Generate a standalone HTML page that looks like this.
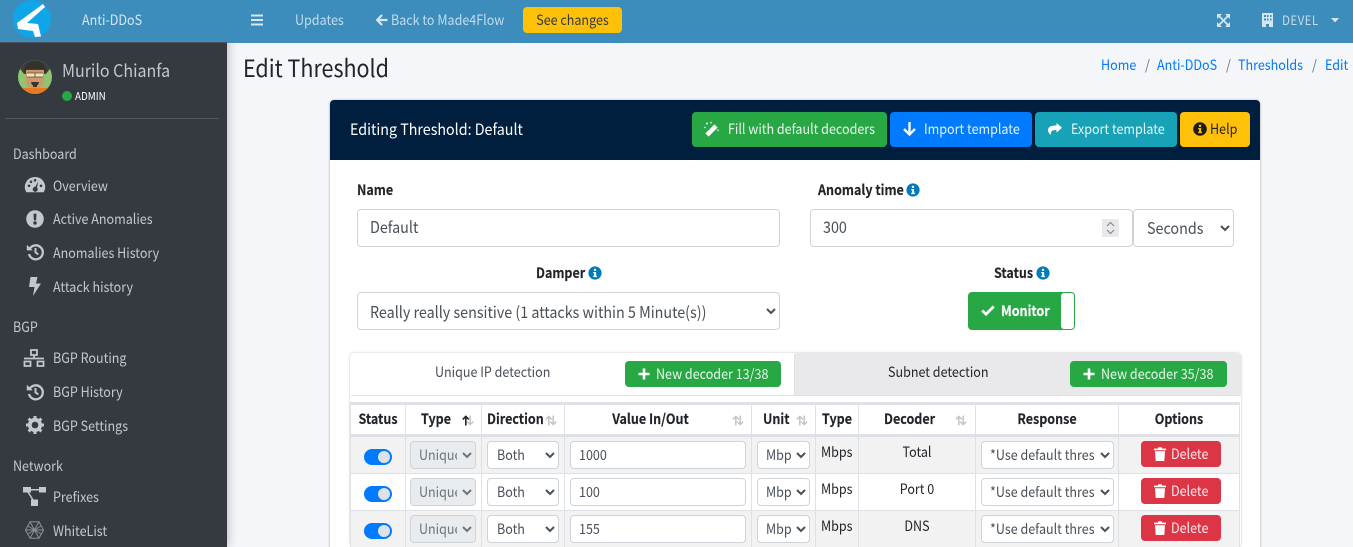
<!DOCTYPE html>
<html><head><meta charset="utf-8"><title>Edit Threshold</title>
<style>
*{box-sizing:border-box}
html,body{margin:0;padding:0;width:1353px;height:547px;overflow:hidden;background:#f4f6f9}
body{font-family:"Noto Sans CJK JP","Liberation Sans",sans-serif;position:relative;font-size:14px;color:#212529}
.a{position:absolute}
.t{position:absolute;white-space:nowrap;line-height:20px;transform:scaleX(.895);transform-origin:0 50%}
.c{text-align:center;transform-origin:50% 50%}
.b{font-weight:700;-webkit-text-stroke:.15px currentColor}
svg{position:absolute;display:block;overflow:visible}
.sb{color:#c2c7d0;font-size:14px}
.sh{color:#c2c7d0;font-size:14px}
.s{display:inline-block;transform:scaleX(.895);transform-origin:0 50%}
.btn{position:absolute;border-radius:4px;color:#fff;font-size:14px;line-height:20px;white-space:nowrap}
.in{position:absolute;background:#fff;border:1px solid #ced4da;border-radius:4px;color:#495057;font-size:16px;line-height:22px;padding-left:12px;white-space:nowrap}
.o{position:absolute;overflow:hidden;white-space:nowrap;line-height:20px;color:#495057;font-size:14px;height:20px}
select{position:absolute;margin:0;background:#fff;border:1px solid #ced4da;border-radius:4px;color:#495057;font-family:"Noto Sans CJK JP","Liberation Sans",sans-serif;padding:0 0 0 8px;font-size:14px}
select.g{background:#e9ecef;color:#6c757d}
.v{position:absolute;width:1px;background:#dee2e6;top:403px;height:144px}
.sw{position:absolute;left:364px;width:28px;height:16px;border-radius:8px;background:#007bff}
.sw i{position:absolute;left:14px;top:2px;width:12px;height:12px;border-radius:50%;background:#dee2e6}
</style></head><body>
<svg width="0" height="0" style="position:absolute"><defs>
<symbol id="info" viewBox="0 0 14 14"><circle cx="7" cy="7" r="6.6" fill="currentColor"/><rect x="5.9" y="2.8" width="2.2" height="2.1" fill="#fff"/><path d="M5.2 6h2.900v3.800h.9v1.300H5.2V9.800h.9V7.300h-.9z" fill="#fff"/></symbol>
<symbol id="infoy" viewBox="0 0 14 14"><circle cx="7" cy="7" r="6.800" fill="#1d1d1d"/><rect x="5.900" y="2.800" width="2.200" height="2.100" fill="#ffc107"/><path d="M5.200 6h2.900v3.800h.9v1.300H5.200V9.800h.9V7.300h-.9z" fill="#ffc107"/></symbol>
<symbol id="hist" viewBox="0 0 18 18"><path d="M3.400 6.500A7 7 0 1 1 3 11" fill="none" stroke="currentColor" stroke-width="2.300"/><path d="M.8 1.800l6 5.600H.8z" fill="currentColor"/><path d="M9.500 5v4.400l2.800 2" fill="none" stroke="currentColor" stroke-width="2"/></symbol>
<symbol id="sort" viewBox="0 0 14 11"><path d="M4.800 10.500V1.600M1.800 4.400l3-3 3 3" fill="none" stroke="#c4c4c4" stroke-width="1.500"/><path d="M9.200.6v8.900M6.200 6.600l3 3 3-3" fill="none" stroke="#c4c4c4" stroke-width="1.500"/></symbol>
<symbol id="plus" viewBox="0 0 12 12"><path d="M6 .5v11M.5 6h11" stroke="#fff" stroke-width="2.600" fill="none"/></symbol>
<symbol id="trash" viewBox="0 0 12 14"><path d="M0 1.600h3.600L4.400.3h3.200l.8 1.300H12v1.600H0z" fill="#fff"/><path d="M1 4.200h10l-.7 9.800H1.700z" fill="#fff"/></symbol>
</defs></svg>

<!-- Sidebar -->
<div class="a" style="left:0;top:0;width:227px;height:547px;background:#343a40;box-shadow:0 0 10px rgba(0,0,0,.3)"></div>
<div class="a" style="left:0;top:0;width:227px;height:43px;background:#3c8dbc;border-bottom:1px solid #4b545c"></div>
<svg style="left:13px;top:0" width="38" height="38" viewBox="0 0 38 38"><circle cx="19" cy="19" r="19" fill="#0ea5e9"/><path d="M30 4L4 23l1 6 15 2 2 6 6-.5-3-12.500-11-1L32 7z" fill="#fff"/></svg>
<div class="t" style="left:82px;top:10px;color:#d5e6f1;font-size:14px">Anti-DDoS</div>
<svg style="left:18px;top:60px" width="34" height="34" viewBox="0 0 34 34"><defs><clipPath id="av"><circle cx="17" cy="17" r="17"/></clipPath></defs><circle cx="17" cy="18" r="17" fill="#22262a" opacity=".5"/><g clip-path="url(#av)"><rect width="34" height="34" fill="#8fc56f"/><path d="M0 0h34v6L28 14 6 14 0 6z" fill="#3e3f3b"/><path d="M8 10h18v11q0 7-9 8-9-1-9-8z" fill="#c99a6b"/><path d="M6 13Q6 1 17 1T28 13l-3-4H9z" fill="#35312d"/><rect x="9" y="13" width="7" height="4" fill="#efe2c8"/><rect x="18" y="13" width="7" height="4" fill="#efe2c8"/><path d="M9 13h16M9 17h16" stroke="#6b4a2c" stroke-width=".8"/><path d="M13 22h8l-1 3h-1v2h-4v-2h-1z" fill="#3a322b"/><path d="M4 28h26v6H4z" fill="#e8791f"/></g></svg>
<div class="t" style="left:62px;top:61px;color:#c2c7d0;font-size:17.500px;transform:scaleX(.915)">Murilo Chianfa</div>
<div class="a" style="left:62px;top:91px;width:10px;height:10px;border-radius:50%;background:#28a745"></div>
<div class="t" style="left:74.500px;top:86px;color:#fff;font-size:11px">ADMIN</div>
<div class="a" style="left:5px;top:118px;width:214px;height:1px;background:#4f5962"></div>

<div class="t sh" style="left:13px;top:144px">Dashboard</div>
<div class="t sh" style="left:13px;top:317px">BGP</div>
<div class="t sh" style="left:13px;top:456px">Network</div>
<div class="t sb" style="left:53px;top:176px">Overview</div>
<div class="t sb" style="left:53px;top:209px">Active Anomalies</div>
<div class="t sb" style="left:53px;top:243px">Anomalies History</div>
<div class="t sb" style="left:53px;top:277px">Attack history</div>
<div class="t sb" style="left:53px;top:348px">BGP Routing</div>
<div class="t sb" style="left:53px;top:382px">BGP History</div>
<div class="t sb" style="left:53px;top:416px">BGP Settings</div>
<div class="t sb" style="left:53px;top:487px">Prefixes</div>
<div class="t sb" style="left:53px;top:521px">WhiteList</div>

<svg style="left:25px;top:177px" width="20" height="16" viewBox="0 0 20 16"><path fill="#c2c7d0" fill-rule="evenodd" d="M10 0a10 10 0 0 1 8.700 15.200H1.300A10 10 0 0 1 10 0zM4 7.500a1.300 1.300 0 1 0 0 2.600 1.300 1.300 0 0 0 0-2.600zM6 3.500a1.300 1.300 0 1 0 0 2.600 1.300 1.300 0 0 0 0-2.600zM10 2a1.300 1.300 0 1 0 0 2.600A1.300 1.300 0 0 0 10 2zM16 7.500a1.300 1.300 0 1 0 0 2.600 1.300 1.300 0 0 0 0-2.600zM13.300 4.500l-3 5.300a2.500 2.500 0 1 0 1.700.7z"/></svg>
<svg style="left:26px;top:210px" width="18" height="18" viewBox="0 0 18 18"><path fill="#c2c7d0" fill-rule="evenodd" d="M9 .2a8.800 8.800 0 1 1 0 17.600A8.800 8.800 0 0 1 9 .2zM7.500 3.600l.4 6.800h2.200l.4-6.800zM9 11.300a1.700 1.700 0 1 0 0 3.400 1.700 1.700 0 0 0 0-3.400z"/></svg>
<svg style="left:26px;top:243px;color:#c2c7d0" width="18" height="18"><use href="#hist"/></svg>
<svg style="left:29px;top:277px" width="12" height="19" viewBox="0 0 12 19"><path fill="#c2c7d0" d="M1.500 0h7L7 6.500h5L4 19l1.500-9H0z"/></svg>
<svg style="left:23px;top:349px" width="22" height="18" viewBox="0 0 22 18"><path fill="none" stroke="#c2c7d0" stroke-width="1.800" d="M8 1h6v5H8zM1.500 12.500h6v4.500h-6zM14.500 12.500h6v4.500h-6zM11 6v3M1 9.500h20"/></svg>
<svg style="left:26px;top:383px;color:#c2c7d0" width="18" height="18"><use href="#hist"/></svg>
<svg style="left:26px;top:416px" width="18" height="18" viewBox="0 0 18 18"><circle cx="9" cy="9" r="5.200" fill="none" stroke="#c2c7d0" stroke-width="3.800"/><path d="M9 0v18M0 9h18M2.600 2.600l12.800 12.800M15.400 2.600L2.600 15.400" stroke="#c2c7d0" stroke-width="3" stroke-dasharray="3.200 11.800" fill="none"/></svg>
<svg style="left:23px;top:487px" width="24" height="19" viewBox="0 0 24 19"><path fill="#c2c7d0" d="M0 0h8v5.500H0zM16 0h7v5.500h-7zM8 12.500h7V19H8z"/><path d="M8 2.800h8M5 5l5 8" stroke="#c2c7d0" stroke-width="1.500" fill="none"/></svg>
<svg style="left:25px;top:521px" width="19" height="18" viewBox="0 0 19 18"><path fill="none" stroke="#8a9097" stroke-width="1" d="M5 .8h9l4.500 8.200-4.500 8.200H5L.5 9zM5 .8l9 16.400M14 .8L5 17.200M.5 9h18M3 5l13 8M16 5L3 13"/></svg>

<!-- Top nav -->
<div class="a" style="left:227px;top:0;width:1126px;height:43px;background:#3c8dbc"></div>
<svg style="left:251px;top:14px" width="12" height="12" viewBox="0 0 12 12"><path d="M0 1.500h12M0 6h12M0 10.500h12" stroke="#d5e6f1" stroke-width="2"/></svg>
<div class="t" style="left:295px;top:10px;color:#c2dced;font-size:14px">Updates</div>
<svg style="left:376px;top:14px" width="12" height="12" viewBox="0 0 12 12"><path d="M11.500 6H2M6 1L1.200 6 6 11" stroke="#d5e6f1" stroke-width="2.200" fill="none"/></svg>
<div class="t" style="left:391px;top:10px;color:#c2dced;font-size:14px">Back to Made4Flow</div>
<div class="a" style="left:523px;top:7px;width:99px;height:26px;background:#ffc107;border-radius:4px"></div>
<div class="t c" style="left:523px;top:10px;width:99px;color:#343a40;font-size:14px">See changes</div>
<svg style="left:1216.500px;top:13.500px" width="13" height="13" viewBox="0 0 13 13"><path d="M2 2l9 9M11 2l-9 9" stroke="#d5e6f1" stroke-width="1.800"/><path fill="#d5e6f1" d="M0 0h5L0 5zM13 0v5L8 0zM0 13V8l5 5zM13 13H8l5-5z"/></svg>
<svg style="left:1262px;top:13px" width="11" height="14" viewBox="0 0 11 14"><path fill="#d5e6f1" fill-rule="evenodd" d="M0 0h11v14H7v-3H4v3H0zM2 2v2h2V2zM5 2v2h1.500V2zM8 2v2h1.500V2zM2 5.500v2h2v-2zM5 5.500v2h1.500v-2zM8 5.500v2h1.500v-2z"/></svg>
<div class="t" style="left:1282px;top:10px;color:#c2dced;font-size:13px;letter-spacing:.4px">DEVEL</div>
<svg style="left:1331px;top:18px" width="8" height="5" viewBox="0 0 8 5"><path fill="#d5e6f1" d="M0 0h8L4 4.500z"/></svg>

<!-- Page title -->
<div class="t" style="left:243px;top:52px;font-size:24px;line-height:30px;color:#212529">Edit Threshold</div>
<div class="t" style="left:1101px;top:55px;color:#007bff;font-size:14px">Home</div>
<div class="t" style="left:1145px;top:55px;color:#6c757d;font-size:14px">/</div>
<div class="t" style="left:1157px;top:55px;color:#007bff;font-size:14px">Anti-DDoS</div>
<div class="t" style="left:1226px;top:55px;color:#6c757d;font-size:14px">/</div>
<div class="t" style="left:1238px;top:55px;color:#007bff;font-size:14px">Thresholds</div>
<div class="t" style="left:1312px;top:55px;color:#6c757d;font-size:14px">/</div>
<div class="t" style="left:1324.500px;top:55px;color:#007bff;font-size:14px">Edit</div>

<!-- Card -->
<div class="a" style="left:330px;top:100px;width:930px;height:460px;background:#fff;border-radius:4px;box-shadow:0 0 2px rgba(0,0,0,.2),0 1px 3px rgba(0,0,0,.15)"></div>
<div class="a" style="left:330px;top:100px;width:930px;height:60px;background:#001f3f;border-radius:4px 4px 0 0"></div>
<div class="t" style="left:350px;top:119px;color:#fff;font-size:15.500px;transform:scaleX(.92)">Editing Threshold: Default</div>

<div class="btn" style="left:692px;top:112px;width:195px;height:35px;background:#28a745;line-height:35px;padding-left:35.500px;color:#e9f6ec"><span class="s">Fill with default decoders</span></div>
<svg style="left:704px;top:121px" width="16" height="16" viewBox="0 0 16 16"><path d="M3 14L12 5" stroke="#fff" stroke-width="4.500"/><path fill="#fff" d="M3 1l1 1.500L3 4 2 2.500zM7 .5l.8 1.300L7 3 6.200 1.800zM14 8l.8 1.200-.8 1.200-.8-1.200zM1 5.500l.8 1-.8 1-.8-1z"/></svg>
<div class="btn" style="left:890px;top:112px;width:142px;height:35px;background:#007bff;line-height:35px;padding-left:34px;color:#e6f2ff"><span class="s">Import template</span></div>
<svg style="left:903px;top:122px" width="13" height="14" viewBox="0 0 13 14"><path d="M6.500 0v12M1 7l5.500 5.500L12 7" stroke="#fff" stroke-width="2.300" fill="none"/></svg>
<div class="btn" style="left:1035px;top:112px;width:142px;height:35px;background:#17a2b8;line-height:35px;padding-left:36px;color:#e6f6f8"><span class="s">Export template</span></div>
<svg style="left:1048px;top:123px" width="14" height="12" viewBox="0 0 14 12"><path fill="#fff" d="M8.500 0L14 4.800 8.500 9.600V7C5 7 2.500 7.500 2.800 12 .8 10.500 0 8.500 0 7c0-3.500 4-4.500 8.500-4.500z"/></svg>
<div class="btn" style="left:1180px;top:112px;width:70px;height:35px;background:#ffc107;line-height:35px;padding-left:30px;color:#212529"><span class="s">Help</span></div>
<svg style="left:1193px;top:122px" width="14" height="14"><use href="#infoy"/></svg>

<!-- Form -->
<div class="t b" style="left:357px;top:180px;font-size:14px">Name</div>
<div class="in" style="left:357px;top:209px;width:423px;height:38px;line-height:32px"><span class="s">Default</span></div>
<div class="t b" style="left:817.500px;top:180px;font-size:14px">Anomaly time</div>
<svg style="left:906px;top:183px;color:#007bbd" width="14" height="14"><use href="#info"/></svg>
<div class="in" style="left:810px;top:209px;width:323px;height:38px;line-height:32px"><span class="s">300</span></div>
<div class="a" style="left:1102px;top:219px;width:17px;height:18px;background:#e9e9ed"></div>
<svg style="left:1106px;top:221px" width="9" height="14" viewBox="0 0 9 14"><path d="M1 5l3.500-3.500L8 5M1 9l3.500 3.500L8 9" stroke="#8a8a8f" stroke-width="1.200" fill="none"/></svg>
<select style="left:1133px;top:209px;width:101px;height:38px;font-size:14px"><option></option></select>
<div class="o" style="left:1147px;top:216px;width:60px;font-size:16px;height:22px;line-height:22px"><span class="s">Seconds</span></div>

<div class="t b" style="left:535.500px;top:263px;font-size:14px">Damper</div>
<svg style="left:588px;top:266px;color:#007bbd" width="14" height="14"><use href="#info"/></svg>
<select style="left:357px;top:292px;width:423px;height:38px;font-size:14px"><option></option></select>
<div class="o" style="left:370px;top:300px;width:380px;font-size:16px;height:22px;line-height:22px"><span class="s">Really really sensitive (1 attacks within 5 Minute(s))</span></div>
<div class="t b" style="left:993.500px;top:263px;font-size:14px">Status</div>
<svg style="left:1036px;top:266px;color:#007bbd" width="14" height="14"><use href="#info"/></svg>
<div class="a" style="left:968px;top:292px;width:107px;height:38px;background:#28a745;border-radius:4px"></div>
<div class="a" style="left:1061px;top:293px;width:13px;height:36px;background:#fff;border-radius:3px"></div>
<svg style="left:981px;top:305px" width="14" height="11" viewBox="0 0 14 11"><path d="M1.300 5.500L5 9.200 12.700 1.500" stroke="#fff" stroke-width="2.800" fill="none"/></svg>
<div class="t b" style="left:1001px;top:301px;color:#fff;font-size:14px">Monitor</div>

<!-- Tabs -->
<div class="a" style="left:350px;top:353px;width:891px;height:194px;background:#fff;border-radius:4px;box-shadow:0 0 2px rgba(0,0,0,.25)"></div>
<div class="a" style="left:795px;top:353px;width:446px;height:43px;background:#e9e9ec;border-radius:0 4px 0 0"></div>
<div class="a" style="left:351px;top:395px;width:889px;height:1px;background:#dee2e6"></div>
<div class="a" style="left:794px;top:354px;width:1px;height:42px;background:#dee2e6"></div>
<div class="t" style="left:435px;top:362px;font-size:14px;color:#495057">Unique IP detection</div>
<div class="t" style="left:888px;top:362px;font-size:14px;color:#212529">Subnet detection</div>
<div class="btn" style="left:625px;top:361px;width:156px;height:26px;background:#28a745;line-height:26px;padding-left:31px;color:#e9f6ec"><span class="s">New decoder 13/38</span></div>
<svg style="left:638px;top:368px" width="12" height="12"><use href="#plus"/></svg>
<div class="btn" style="left:1070px;top:361px;width:157px;height:26px;background:#28a745;line-height:26px;padding-left:31px;color:#e9f6ec"><span class="s">New decoder 35/38</span></div>
<svg style="left:1083px;top:368px" width="12" height="12"><use href="#plus"/></svg>

<!-- Table -->
<div class="a" style="left:350px;top:402px;width:890px;height:3px;background:#dee2e6"></div>
<div class="a" style="left:351px;top:434px;width:888px;height:3px;background:#dee2e6"></div>
<div class="a" style="left:351px;top:437px;width:888px;height:37px;background:#f2f2f2;border-bottom:1px solid #dee2e6"></div>
<div class="a" style="left:351px;top:474px;width:888px;height:37px;background:#fff;border-bottom:1px solid #dee2e6"></div>
<div class="a" style="left:351px;top:511px;width:888px;height:36px;background:#f2f2f2"></div>
<div class="v" style="left:350px"></div><div class="v" style="left:405px"></div><div class="v" style="left:481px"></div><div class="v" style="left:564px"></div><div class="v" style="left:751px"></div><div class="v" style="left:815px"></div><div class="v" style="left:858px"></div><div class="v" style="left:975px"></div><div class="v" style="left:1118px"></div><div class="v" style="left:1239px"></div>

<div class="t b c" style="left:351px;width:54px;top:409px">Status</div>
<div class="t b" style="left:421px;top:409px">Type</div>
<div class="t b" style="left:487px;top:409px">Direction</div>
<div class="t b c" style="left:565px;width:171px;top:409px">Value In/Out</div>
<div class="t b" style="left:763px;top:409px">Unit</div>
<div class="t b" style="left:822px;top:409px">Type</div>
<div class="t b" style="left:884px;top:409px">Decoder</div>
<div class="t b c" style="left:976px;width:142px;top:409px">Response</div>
<div class="t b c" style="left:1119px;width:120px;top:409px">Options</div>
<svg style="left:461px;top:415px" width="14" height="11"><use href="#sort"/></svg>
<svg style="left:461px;top:415px" width="7" height="11" viewBox="0 0 7 11"><path d="M4.800 10.500V1.600M1.800 4.400l3-3 3 3" fill="none" stroke="#212529" stroke-width="1.600"/></svg>
<svg style="left:544px;top:415px" width="14" height="11"><use href="#sort"/></svg>
<svg style="left:731px;top:415px" width="14" height="11"><use href="#sort"/></svg>
<svg style="left:795px;top:415px" width="14" height="11"><use href="#sort"/></svg>
<svg style="left:954px;top:415px" width="14" height="11"><use href="#sort"/></svg>

<!-- Row 1 -->
<div class="sw" style="top:449px"><i></i></div>
<select class="g" style="left:410px;top:441px;width:66px;height:28px"><option></option></select>
<div class="o" style="left:419px;top:445px;width:38px;color:#6c757d"><span class="s">Unique IP</span></div>
<select style="left:487px;top:441px;width:72px;height:28px"><option></option></select>
<div class="o" style="left:496.500px;top:445px;width:40px"><span class="s">Both</span></div>
<div class="in" style="left:570px;top:441px;width:176px;height:28px;font-size:14px;line-height:26px;padding-left:8px"><span class="s">1000</span></div>
<select style="left:757px;top:441px;width:53px;height:28px"><option></option></select>
<div class="o" style="left:766px;top:445px;width:25px"><span class="s">Mbps</span></div>
<div class="t" style="left:821px;top:442px">Mbps</div>
<div class="t c" style="left:859px;width:116px;top:442px">Total</div>
<select style="left:981px;top:441px;width:133px;height:28px"><option></option></select>
<div class="o" style="left:990px;top:445px;width:104px"><span class="s">*Use default threshold</span></div>
<div class="btn" style="left:1141px;top:441px;width:80px;height:26px;background:#dc3545;line-height:26px;padding-left:29.500px;color:#fbeaec"><span class="s">Delete</span></div>
<svg style="left:1154px;top:446.500px" width="12" height="14"><use href="#trash"/></svg>

<!-- Row 2 -->
<div class="sw" style="top:486px"><i></i></div>
<select class="g" style="left:410px;top:478px;width:66px;height:28px"><option></option></select>
<div class="o" style="left:419px;top:482px;width:38px;color:#6c757d"><span class="s">Unique IP</span></div>
<select style="left:487px;top:478px;width:72px;height:28px"><option></option></select>
<div class="o" style="left:496.500px;top:482px;width:40px"><span class="s">Both</span></div>
<div class="in" style="left:570px;top:478px;width:176px;height:28px;font-size:14px;line-height:26px;padding-left:8px"><span class="s">100</span></div>
<select style="left:757px;top:478px;width:53px;height:28px"><option></option></select>
<div class="o" style="left:766px;top:482px;width:25px"><span class="s">Mbps</span></div>
<div class="t" style="left:821px;top:479px">Mbps</div>
<div class="t c" style="left:859px;width:116px;top:479px">Port 0</div>
<select style="left:981px;top:478px;width:133px;height:28px"><option></option></select>
<div class="o" style="left:990px;top:482px;width:104px"><span class="s">*Use default threshold</span></div>
<div class="btn" style="left:1141px;top:478px;width:80px;height:26px;background:#dc3545;line-height:26px;padding-left:29.500px;color:#fbeaec"><span class="s">Delete</span></div>
<svg style="left:1154px;top:483.500px" width="12" height="14"><use href="#trash"/></svg>

<!-- Row 3 -->
<div class="sw" style="top:523px"><i></i></div>
<select class="g" style="left:410px;top:515px;width:66px;height:28px"><option></option></select>
<div class="o" style="left:419px;top:519px;width:38px;color:#6c757d"><span class="s">Unique IP</span></div>
<select style="left:487px;top:515px;width:72px;height:28px"><option></option></select>
<div class="o" style="left:496.500px;top:519px;width:40px"><span class="s">Both</span></div>
<div class="in" style="left:570px;top:515px;width:176px;height:28px;font-size:14px;line-height:26px;padding-left:8px"><span class="s">155</span></div>
<select style="left:757px;top:515px;width:53px;height:28px"><option></option></select>
<div class="o" style="left:766px;top:519px;width:25px"><span class="s">Mbps</span></div>
<div class="t" style="left:821px;top:516px">Mbps</div>
<div class="t c" style="left:859px;width:116px;top:516px">DNS</div>
<select style="left:981px;top:515px;width:133px;height:28px"><option></option></select>
<div class="o" style="left:990px;top:519px;width:104px"><span class="s">*Use default threshold</span></div>
<div class="btn" style="left:1141px;top:515px;width:80px;height:26px;background:#dc3545;line-height:26px;padding-left:29.500px;color:#fbeaec"><span class="s">Delete</span></div>
<svg style="left:1154px;top:520.500px" width="12" height="14"><use href="#trash"/></svg>
</body></html>
